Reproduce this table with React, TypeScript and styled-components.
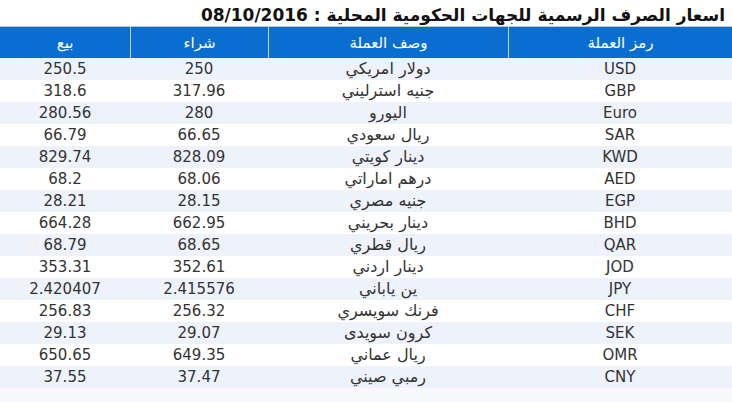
import styled, { createGlobalStyle } from "styled-components";

const GlobalStyle = createGlobalStyle`
  html, body {
    margin: 0;
    padding: 0;
    background: #ffffff;
  }
  body {
    font-family: "DejaVu Sans", "Noto Sans", sans-serif;
  }
`;

const Page = styled.div`
  width: 732px;
  height: 402px;
  direction: rtl;
  display: flex;
  flex-direction: column;
  background: #f8f9fc;
`;

const Title = styled.div`
  height: 27px;
  box-sizing: border-box;
  padding: 5px 7px 0 0;
  background: #ffffff;
  font-size: 17px;
  font-weight: bold;
  color: #111;
  white-space: nowrap;
  border-bottom: 1px solid #c3c6cc;
`;

const Table = styled.div`
  display: grid;
  grid-template-columns: 224px 240px 138px 130px;
`;

const HeadCell = styled.div<{ last?: boolean }>`
  height: 31px;
  display: flex;
  align-items: center;
  justify-content: center;
  background: #0a6ed1;
  color: #ffffff;
  font-size: 15px;
  border-left: ${(p) => (p.last ? "none" : "1px solid #c8d2de")};
  box-sizing: border-box;
`;

const Cell = styled.div<{ odd: boolean; arabic?: boolean }>`
  height: 22px;
  display: flex;
  align-items: center;
  justify-content: center;
  background: ${(p) => (p.odd ? "#eef2fb" : "#ffffff")};
  color: #333;
  font-size: ${(p) => (p.arabic ? "16px" : "15px")};
  line-height: ${(p) => (p.arabic ? "20px" : "22px")};
  direction: rtl;
`;

const Num = styled.span`
  direction: ltr;
`;

const rows: [string, string, string, string][] = [
  ["USD", "دولار امريكي", "250", "250.5"],
  ["GBP", "جنيه استرليني", "317.96", "318.6"],
  ["Euro", "اليورو", "280", "280.56"],
  ["SAR", "ريال سعودي", "66.65", "66.79"],
  ["KWD", "دينار كويتي", "828.09", "829.74"],
  ["AED", "درهم اماراتي", "68.06", "68.2"],
  ["EGP", "جنيه مصري", "28.15", "28.21"],
  ["BHD", "دينار بحريني", "662.95", "664.28"],
  ["QAR", "ريال قطري", "68.65", "68.79"],
  ["JOD", "دينار اردني", "352.61", "353.31"],
  ["JPY", "ين ياباني", "2.415576", "2.420407"],
  ["CHF", "فرنك سويسري", "256.32", "256.83"],
  ["SEK", "كرون سويدى", "29.07", "29.13"],
  ["OMR", "ريال عماني", "649.35", "650.65"],
  ["CNY", "رمبي صيني", "37.47", "37.55"],
];

const App = () => {
  return (
    <Page>
      <GlobalStyle />
      <Title>اسعار الصرف الرسمية للجهات الحكومية المحلية : 08/10/2016</Title>
      <Table>
        <HeadCell>رمز العملة</HeadCell>
        <HeadCell>وصف العملة</HeadCell>
        <HeadCell>شراء</HeadCell>
        <HeadCell last>بيع</HeadCell>
        {rows.map((row, idx) => {
          const odd = idx % 2 === 0;
          return [
            <Cell odd={odd} key={`c_${idx}`}>
              <Num>{row[0]}</Num>
            </Cell>,
            <Cell odd={odd} arabic key={`d_${idx}`}>
              {row[1]}
            </Cell>,
            <Cell odd={odd} key={`b_${idx}`}>
              <Num>{row[2]}</Num>
            </Cell>,
            <Cell odd={odd} key={`s_${idx}`}>
              <Num>{row[3]}</Num>
            </Cell>,
          ];
        })}
      </Table>
    </Page>
  );
};

export default App;
